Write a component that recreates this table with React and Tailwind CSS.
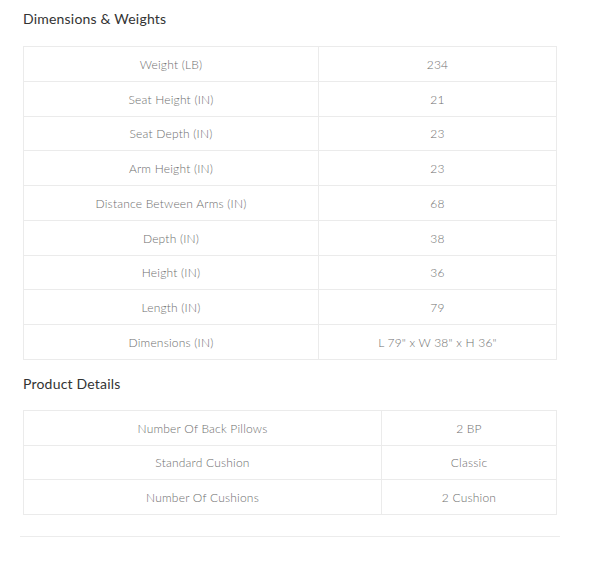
import React from "react";

const dimensions = [
  ["Weight (LB)", "234"],
  ["Seat Height (IN)", "21"],
  ["Seat Depth (IN)", "23"],
  ["Arm Height (IN)", "23"],
  ["Distance Between Arms (IN)", "68"],
  ["Depth (IN)", "38"],
  ["Height (IN)", "36"],
  ["Length (IN)", "79"],
  ["Dimensions (IN)", 'L 79" x W 38" x H 36"'],
];

const details = [
  ["Number Of Back Pillows", "2 BP"],
  ["Standard Cushion", "Classic"],
  ["Number Of Cushions", "2 Cushion"],
];

const SpecTable = ({ rows, labelWidth }) => (
  <div className="border border-[#ebebeb] border-b-0">
    {rows.map(([label, value]) => (
      <div key={label} className="flex h-[34.75px] border-b border-[#ebebeb]">
        <div
          className={`${labelWidth} flex items-center justify-center pt-[2px] border-r border-[#ebebeb] text-[12px] tracking-[0.2px] font-light text-[#6e6e6e]`}
        >
          {label}
        </div>
        <div className="flex-1 flex items-center justify-center pt-[2px] text-[12px] tracking-[0.2px] font-light text-[#6e6e6e]">
          {value}
        </div>
      </div>
    ))}
  </div>
);

const App = () => {
  return (
    <div
      className="w-[600px] h-[575px] bg-white pt-[10px]"
      style={{ fontFamily: "Lato, 'Open Sans', sans-serif" }}
    >
      <div className="w-[540px] ml-[20px]">
        <div className="px-[3px]">
          <h2 className="text-[14px] tracking-[0.2px] text-[#333333] leading-[18px] h-[36px]">
            Dimensions &amp; Weights
          </h2>
          <SpecTable rows={dimensions} labelWidth="w-[295px]" />
          <h2 className="text-[14px] tracking-[0.2px] text-[#333333] leading-[18px] mt-[15px] h-[35px]">
            Product Details
          </h2>
          <SpecTable rows={details} labelWidth="w-[358px]" />
        </div>
        <div className="mt-[21px] border-t border-[#ececec]" />
      </div>
    </div>
  );
};

export default App;
